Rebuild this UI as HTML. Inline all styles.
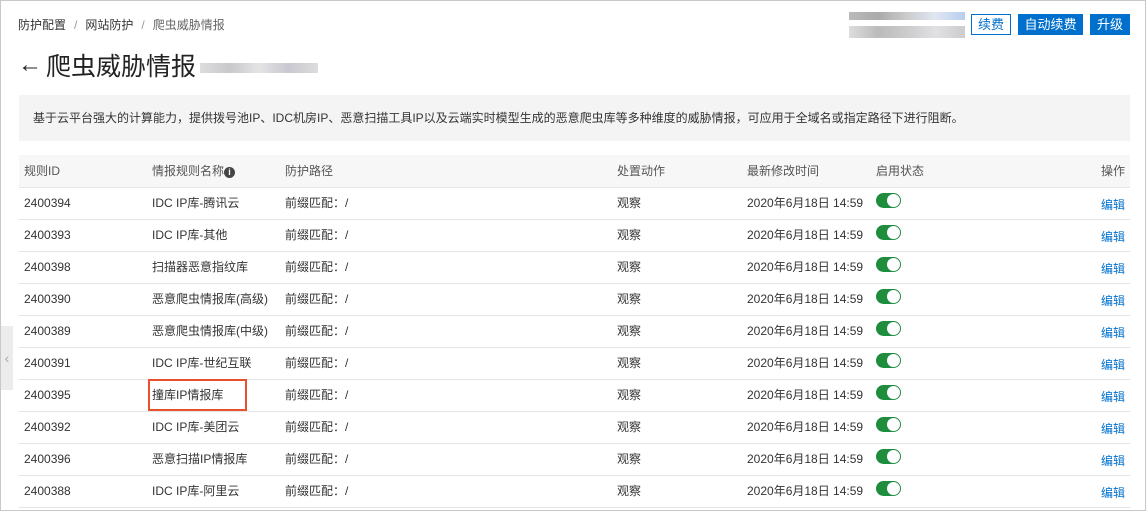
<!DOCTYPE html><html><head><meta charset="utf-8"><style>
*{margin:0;padding:0;box-sizing:border-box}
body{width:1146px;height:511px;overflow:hidden;background:#fff;font-family:"Liberation Sans","Noto Sans CJK SC",sans-serif;color:#333;font-size:12px;position:relative;border:1px solid #c8c8c8}
.a{position:absolute}
.bc{left:17px;top:15px;color:#333}
.bc span{color:#999;margin:0 8px}
.bc .c{color:#666;margin:0}
.t{left:17px;top:49px;font-size:25px;color:#222;line-height:34px}
.t b{font-weight:normal;font-size:24px;margin-right:4px;position:relative;top:-3px}
.blur{display:inline-block;vertical-align:middle;height:10px;width:118px;background:linear-gradient(90deg,#ddd,#c8c8cc,#e4e4e4,#c8c8d0,#ddd);margin-left:4px}
.btn{top:13px;height:21px;line-height:19px;font-size:13px;text-align:center;background:#0070cc;color:#fff;border:1px solid #0070cc}
.desc{left:18px;top:94px;width:1111px;height:46px;background:#f4f4f4;line-height:46px;padding-left:14px;color:#333}
table{position:absolute;left:18px;top:154px;width:1111px;border-collapse:collapse}
td,th{height:32px;border-bottom:1px solid #e6e6e6;font-weight:normal;text-align:left;color:#333;white-space:nowrap;vertical-align:middle;padding:0;line-height:14px}
th{background:#f7f7f7;color:#555}
td:first-child,th:first-child{padding-left:5px}
.sw{display:inline-block;width:25px;height:15px;background:#1e8e3e;border-radius:8px;position:relative;vertical-align:middle;margin-top:-6px}
.sw:after{content:"";position:absolute;right:1px;top:1px;width:13px;height:13px;border-radius:50%;background:#fff}
.ed{color:#0070cc;text-align:right;padding-right:5px;padding-top:4px}
.i{display:inline-block;width:11px;height:11px;border-radius:50%;background:#444;color:#fff;font-size:9px;line-height:11px;text-align:center;font-weight:bold;vertical-align:0}
</style></head><body>
<div class="a bc">防护配置<span>/</span>网站防护<span>/</span><span class="c">爬虫威胁情报</span></div>
<div class="a t"><b>←</b>爬虫威胁情报<span class="blur"></span></div>
<div class="a" style="left:848px;top:11px;width:116px;height:8px;background:linear-gradient(90deg,#bbb,#aaa,#ccc,#dfe6f4,#b9cdee)"></div>
<div class="a" style="left:848px;top:25px;width:116px;height:12px;background:linear-gradient(90deg,#ddd,#bbb,#ccc,#e0e0e4,#ccc)"></div>
<div class="a btn" style="left:970px;width:40px;background:#fff;color:#0070cc">续费</div>
<div class="a btn" style="left:1017px;width:65px">自动续费</div>
<div class="a btn" style="left:1089px;width:40px">升级</div>
<div class="a desc">基于云平台强大的计算能力，提供拨号池IP、IDC机房IP、恶意扫描工具IP以及云端实时模型生成的恶意爬虫库等多种维度的威胁情报，可应用于全域名或指定路径下进行阻断。</div>
<div class="a" style="left:0;top:325px;width:12px;height:64px;background:#ececec;color:#aaa;font-size:14px;line-height:64px;text-align:center">‹</div>
<table>
<tr><th style="width:133px">规则ID</th><th style="width:133px">情报规则名称<span class="i">i</span></th><th style="width:332px">防护路径</th><th style="width:130px">处置动作</th><th style="width:129px">最新修改时间</th><th>启用状态</th><th style="text-align:right;padding-right:5px">操作</th></tr>
<tr><td>2400394</td><td>IDC IP库-腾讯云</td><td>前缀匹配：/</td><td>观察</td><td>2020年6月18日 14:59</td><td><span class="sw"></span></td><td class="ed">编辑</td></tr>
<tr><td>2400393</td><td>IDC IP库-其他</td><td>前缀匹配：/</td><td>观察</td><td>2020年6月18日 14:59</td><td><span class="sw"></span></td><td class="ed">编辑</td></tr>
<tr><td>2400398</td><td>扫描器恶意指纹库</td><td>前缀匹配：/</td><td>观察</td><td>2020年6月18日 14:59</td><td><span class="sw"></span></td><td class="ed">编辑</td></tr>
<tr><td>2400390</td><td>恶意爬虫情报库(高级)</td><td>前缀匹配：/</td><td>观察</td><td>2020年6月18日 14:59</td><td><span class="sw"></span></td><td class="ed">编辑</td></tr>
<tr><td>2400389</td><td>恶意爬虫情报库(中级)</td><td>前缀匹配：/</td><td>观察</td><td>2020年6月18日 14:59</td><td><span class="sw"></span></td><td class="ed">编辑</td></tr>
<tr><td>2400391</td><td>IDC IP库-世纪互联</td><td>前缀匹配：/</td><td>观察</td><td>2020年6月18日 14:59</td><td><span class="sw"></span></td><td class="ed">编辑</td></tr>
<tr><td>2400395</td><td>撞库IP情报库</td><td>前缀匹配：/</td><td>观察</td><td>2020年6月18日 14:59</td><td><span class="sw"></span></td><td class="ed">编辑</td></tr>
<tr><td>2400392</td><td>IDC IP库-美团云</td><td>前缀匹配：/</td><td>观察</td><td>2020年6月18日 14:59</td><td><span class="sw"></span></td><td class="ed">编辑</td></tr>
<tr><td>2400396</td><td>恶意扫描IP情报库</td><td>前缀匹配：/</td><td>观察</td><td>2020年6月18日 14:59</td><td><span class="sw"></span></td><td class="ed">编辑</td></tr>
<tr><td>2400388</td><td>IDC IP库-阿里云</td><td>前缀匹配：/</td><td>观察</td><td>2020年6月18日 14:59</td><td><span class="sw"></span></td><td class="ed">编辑</td></tr>
</table>
<div class="a" style="left:147px;top:378px;width:99px;height:32px;border:2px solid #e8502f"></div>
</body></html>
